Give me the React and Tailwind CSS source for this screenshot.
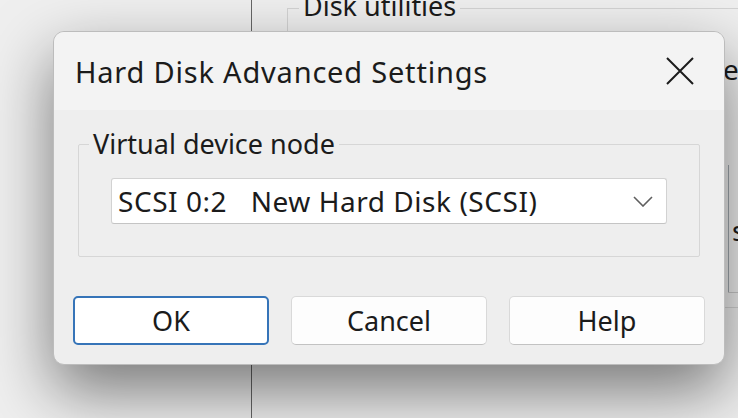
import React from "react";

function Btn({ children, primary }) {
  return (
    <button
      className={
        primary
          ? "w-[196px] h-[49px] shrink-0 rounded-[5px] bg-white border-2 border-[#3674b8] text-[27px] leading-none text-[#1b1b1b]"
          : "w-[196px] h-[49px] shrink-0 rounded-[5px] bg-[#fdfdfd] border border-[#d9d9d9] border-b-[#c2c2c2] text-[27px] leading-none text-[#1b1b1b]"
      }
    >
      {children}
    </button>
  );
}

export default function App() {
  return (
    <div className="relative w-[738px] h-[418px] overflow-hidden bg-[#efefef] text-[#1b1b1b] font-['Noto_Sans',sans-serif]">
      {/* background window */}
      <div className="absolute left-[251px] top-0 h-full w-px bg-[#666666]" />
      <div className="absolute left-[287px] top-[8px] w-[470px] h-[300px] border border-[#d3d3d3]" />
      <div className="absolute left-[299px] top-[-9px] px-[4px] bg-[#efefef] text-[27px] leading-[30px]">Disk utilities</div>
      <div className="absolute left-[723px] top-[54px] text-[28px] leading-[30px]">e</div>
      <div className="absolute left-[728px] top-[165px] h-[128px] w-px bg-[#9ea6ad]" />
      <div className="absolute left-[728px] top-[292px] h-px w-[10px] bg-[#c8c8c8]" />
      <div className="absolute left-[732px] top-[215px] text-[28px] leading-[30px]">s</div>

      {/* dialog */}
      <div className="absolute left-[53px] top-[31px] w-[672px] h-[334px] rounded-[11px] border border-[#bcbcbc] bg-[#eeeeee] shadow-[0_26px_64px_rgba(0,0,0,0.5)] flex flex-col overflow-hidden">
        <div className="h-[78px] shrink-0 bg-[#f3f3f3] flex items-center justify-between pl-[21px] pr-[30px]">
          <span className="text-[29px] tracking-[0.8px] leading-none">Hard Disk Advanced Settings</span>
          <svg width="28" height="28" viewBox="0 0 28 28" fill="none" stroke="#1b1b1b" strokeWidth="2">
            <path d="M1 1 L27 27 M27 1 L1 27" />
          </svg>
        </div>
        <div className="flex flex-col px-[24px] pt-[19px]">
          <fieldset className="border border-[#d6d6d6] rounded-[2px] px-[32px] pt-[19px] pb-[32px]">
            <legend className="-ml-[22px] px-[4px] text-[27px] leading-[30px]">Virtual device node</legend>
            <div className="h-[46px] bg-white border border-[#d2d2d2] border-b-[#c4c4c4] rounded-[3px] flex items-center justify-between pl-[6px] pr-[13px]">
              <span className="text-[28px] tracking-[0.55px] leading-none whitespace-pre">SCSI 0:2   New Hard Disk (SCSI)</span>
              <svg width="20" height="11" viewBox="0 0 20 11" fill="none" stroke="#5f5f5f" strokeWidth="1.6">
                <path d="M1 1 L10 10 L19 1" />
              </svg>
            </div>
          </fieldset>
        </div>
        <div className="flex gap-[22px] mt-[39px] px-[19px]">
          <Btn primary>OK</Btn>
          <Btn>Cancel</Btn>
          <Btn>Help</Btn>
        </div>
      </div>
    </div>
  );
}
